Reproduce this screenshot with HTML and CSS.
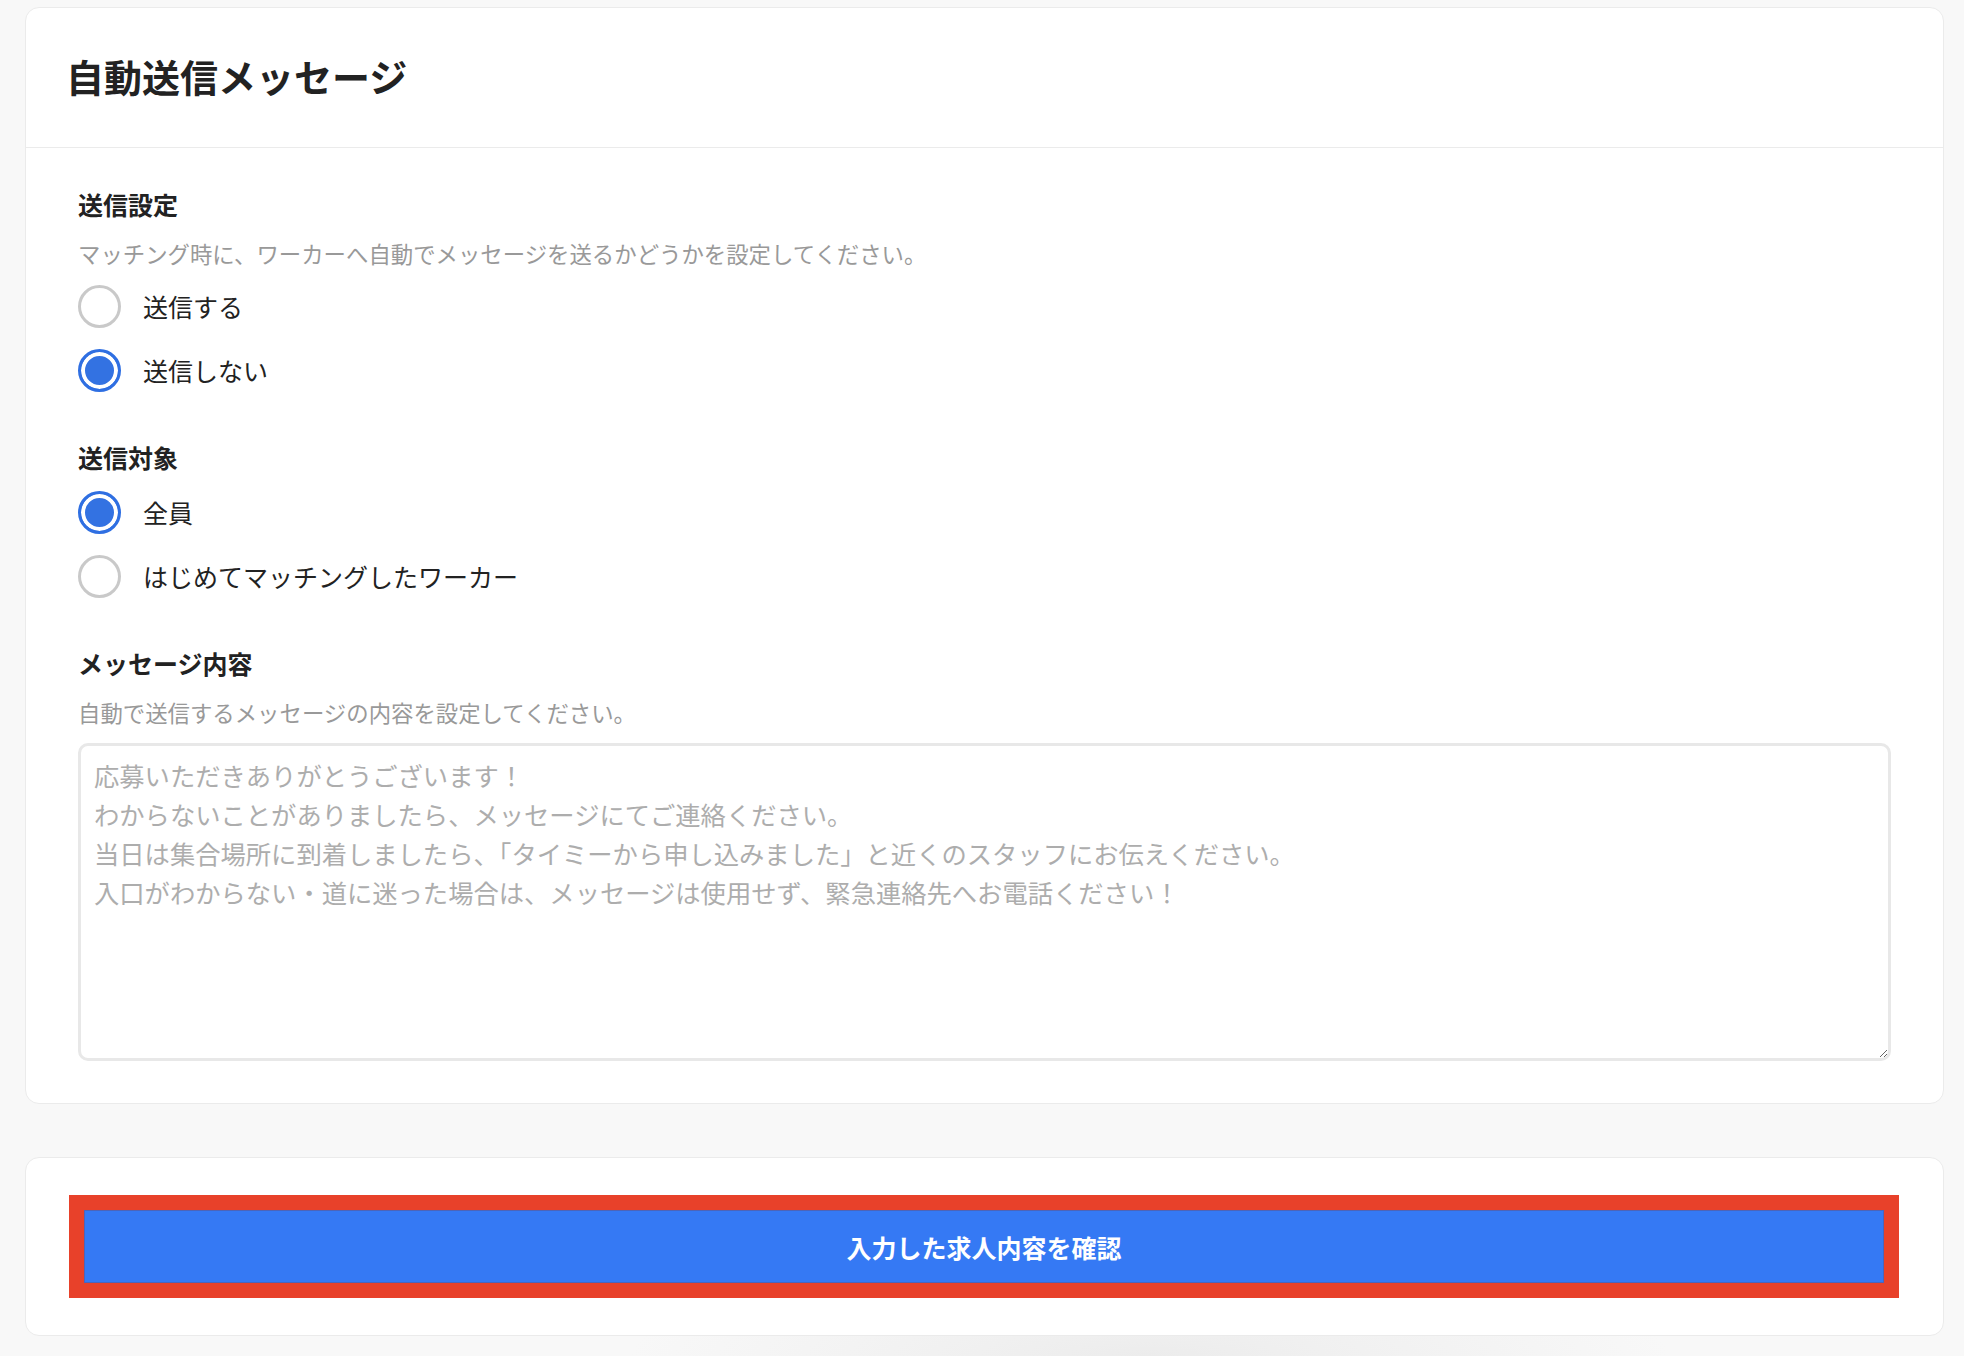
FILE: index.html
```html
<!DOCTYPE html>
<html lang="ja">
<head>
    <meta charset="UTF-8">
    <meta name="viewport" content="width=device-width, initial-scale=1.0">
    <title>自動送信メッセージ</title>
    <link rel="stylesheet" href="styles.css">
</head>
<body>
    <div class="page">
        <section class="card">
            <div class="card-header">
                <h1 class="card-title">自動送信メッセージ</h1>
            </div>

            <div class="card-body">
                <div class="field">
                    <div class="field-label">送信設定</div>
                    <p class="field-desc">マッチング時に、ワーカーへ自動でメッセージを送るかどうかを設定してください。</p>
                    <div class="options">
                        <label class="option">
                            <input type="radio" name="send" value="on">
                            <span>送信する</span>
                        </label>
                        <label class="option">
                            <input type="radio" name="send" value="off" checked>
                            <span>送信しない</span>
                        </label>
                    </div>
                </div>

                <div class="field">
                    <div class="field-label">送信対象</div>
                    <div class="options">
                        <label class="option">
                            <input type="radio" name="target" value="all" checked>
                            <span>全員</span>
                        </label>
                        <label class="option">
                            <input type="radio" name="target" value="first">
                            <span>はじめてマッチングしたワーカー</span>
                        </label>
                    </div>
                </div>

                <div class="field">
                    <div class="field-label">メッセージ内容</div>
                    <p class="field-desc">自動で送信するメッセージの内容を設定してください。</p>
                    <textarea class="message" placeholder="応募いただきありがとうございます！&#10;わからないことがありましたら、メッセージにてご連絡ください。&#10;当日は集合場所に到着しましたら、「タイミーから申し込みました」と近くのスタッフにお伝えください。&#10;入口がわからない・道に迷った場合は、メッセージは使用せず、緊急連絡先へお電話ください！"></textarea>
                </div>
            </div>
        </section>

        <section class="card card-actions">
            <div class="highlight">
                <button class="confirm-btn" type="button">入力した求人内容を確認</button>
            </div>
        </section>
    </div>
</body>
</html>
```

FILE: styles.css
```css
* {
    box-sizing: border-box;
}

html {
    background-color: #f8f8f8;
}

body {
    margin: 0;
    padding: 0;
    min-height: 100vh;
    background: radial-gradient(ellipse 520px 90px at 1150px 100%, #ececec, rgba(248, 248, 248, 0)) #f8f8f8;
    font-family: "Noto Sans CJK JP", "Noto Sans", sans-serif;
    color: #222;
}

.page {
    padding: 7px 20px 0 25px;
}

.card {
    background-color: #fff;
    border: 1px solid #ebebeb;
    border-radius: 14px;
}

.card-header {
    height: 140px;
    padding: 0 40px 3px;
    display: flex;
    align-items: center;
    border-bottom: 1px solid #ebebeb;
}

.card-title {
    margin: 0;
    font-size: 38px;
    font-weight: 700;
    line-height: 1.2;
}

.card-body {
    padding: 38px 52px 42px;
}

.field + .field {
    margin-top: 47px;
}

.field-label {
    font-size: 25px;
    font-weight: 700;
    line-height: 36px;
}

.field-desc {
    margin: 14px 0 0;
    font-size: 22.4px;
    line-height: 34px;
    color: #999;
}

.options {
    margin-top: 14px;
    display: flex;
    flex-direction: column;
    gap: 20px;
}

.field-label + .options {
    margin-top: 15px;
}

.option {
    display: flex;
    align-items: center;
    gap: 22px;
    font-size: 25px;
    line-height: 44px;
    cursor: pointer;
}

.option input {
    appearance: none;
    -webkit-appearance: none;
    margin: 0;
    width: 43px;
    height: 43px;
    flex: none;
    border: 3px solid #c9c9c9;
    border-radius: 50%;
    background-color: #fff;
}

.option input:checked {
    border-color: #2f6fe2;
    background-color: #3372e2;
    box-shadow: inset 0 0 0 4px #fff;
}

.message {
    display: block;
    width: 100%;
    height: 318px;
    margin-top: 14px;
    padding: 10px 13px;
    border: 3px solid #e8e8e8;
    border-radius: 10px;
    font-family: inherit;
    font-size: 25.3px;
    line-height: 39px;
    color: #222;
    resize: vertical;
}

.message::placeholder {
    color: #adadad;
}

.card-actions {
    margin-top: 53px;
    padding: 37px 44px 37px 43px;
}

.highlight {
    border: 15px solid #e8412a;
}

.confirm-btn {
    display: block;
    width: 100%;
    height: 73px;
    border: none;
    background-color: #3579f4;
    box-shadow: inset 0 0 0 1px #4d64b8;
    color: #fff;
    font-family: inherit;
    font-size: 25px;
    font-weight: 700;
    cursor: pointer;
}
```
